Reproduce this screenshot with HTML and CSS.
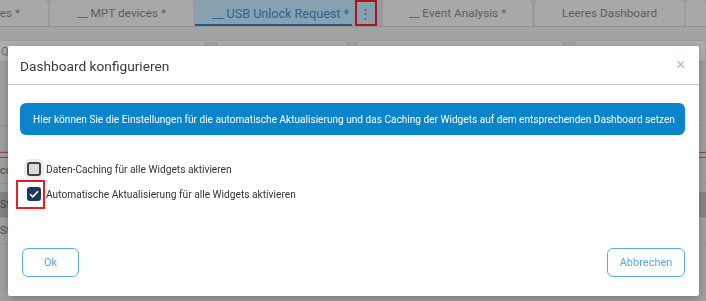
FILE: index.html
```html
<!DOCTYPE html>
<html lang="de">
<head>
  <meta charset="UTF-8">
  <title>Dashboard konfigurieren</title>
  <link rel="stylesheet" href="styles.css">
</head>
<body>
  <div class="page">
    <div class="tabs">
      <div class="tab tab-cut">Queries *</div>
      <div class="tab">__ MPT devices *</div>
      <div class="tab active">__ USB Unlock Request *</div>
      <div class="tab-menu"><span class="dots">&#8942;</span></div>
      <div class="tab tab-wide">__ Event Analysis *</div>
      <div class="tab tab-wide">Leeres Dashboard</div>
      <div class="tab tab-rest"></div>
    </div>
    <div class="toolbar">
      <div class="field search"><span class="field-text">Queue</span><span class="lens"></span></div>
      <div class="field select"><span class="doc"></span><span class="field-text">Dashboard</span></div>
      <div class="field search"><span class="field-text">Alerts</span><span class="lens"></span></div>
      <div class="field select"><span class="doc"></span><span class="field-text">Dashboard</span></div>
    </div>
    <div class="workspace">
      <div class="row"></div>
      <div class="row"></div>
      <div class="row red"></div>
      <div class="row">comp</div>
      <div class="row dark">Status</div>
      <div class="row">Status</div>
    </div>
  </div>

  <div class="backdrop"></div>

  <div class="modal">
    <div class="modal-header">
      <span class="modal-title">Dashboard konfigurieren</span>
      <span class="close">&times;</span>
    </div>
    <div class="modal-body">
      <div class="info">Hier können Sie die Einstellungen für die automatische Aktualisierung und das Caching der Widgets auf dem entsprechenden Dashboard setzen</div>
      <div class="options">
        <label class="option">
          <span class="check focused"></span>
          <span>Daten-Caching für alle Widgets aktivieren</span>
        </label>
        <label class="option">
          <span class="check checked marked">
            <svg width="10" height="8" viewBox="0 0 10 8"><path d="M1 4.2 L3.8 6.8 L9 1.2" fill="none" stroke="#fff" stroke-width="1.6"/></svg>
          </span>
          <span>Automatische Aktualisierung für alle Widgets aktivieren</span>
        </label>
      </div>
    </div>
    <div class="modal-footer">
      <button class="btn btn-ok">Ok</button>
      <button class="btn btn-cancel">Abbrechen</button>
    </div>
  </div>
</body>
</html>
```

FILE: styles.css
```css
body {
  margin: 0;
  font-family: Roboto, "Liberation Sans", sans-serif;
  background-color: #e4e4e4;
  overflow: hidden;
}
.page {
  width: 706px;
  height: 301px;
}
.tabs {
  display: flex;
  gap: 2px;
  height: 26px;
  background-color: #dedede;
  border-bottom: 1px solid #d2d2d2;
}
.tab {
  display: flex;
  align-items: center;
  justify-content: center;
  flex-shrink: 0;
  width: 143px;
  height: 26px;
  background-color: #f1f1f1;
  border-radius: 4px 4px 0 0;
  color: #888;
  font-size: 11.8px;
  white-space: nowrap;
  overflow: hidden;
}
.tab-cut {
  width: 48px;
  justify-content: flex-end;
  padding-right: 28px;
  box-sizing: border-box;
  border-radius: 0 4px 0 0;
}
.tab.active {
  width: 157px;
  justify-content: flex-end;
  padding-right: 3px;
  box-sizing: border-box;
  background-color: #c5e6fc;
  color: #4390ce;
  font-size: 12.6px;
  box-shadow: inset 0 -2px 0 #2a82cb;
  border-radius: 0;
}
.tab-menu {
  position: relative;
  flex-shrink: 0;
  width: 27px;
  height: 26px;
  margin-left: -2px;
  margin-right: 1px;
  background-color: #c5e6fc;
  display: flex;
  align-items: center;
  justify-content: center;
  color: #8a8a8a;
  font-size: 13px;
}
.tab-menu::after {
  content: "";
  position: absolute;
  left: 3px;
  top: 0;
  width: 22px;
  height: 26px;
  border: 2px solid #ff1a22;
  box-sizing: border-box;
}
.tab-wide {
  width: 149px;
  margin-left: 1px;
}
.tab-rest {
  flex: 1;
}
.toolbar {
  display: flex;
  gap: 10px;
  padding: 13px 0 0 0;
  background-color: #eaeaea;
  height: 20px;
}
.field {
  display: flex;
  align-items: center;
  height: 22px;
  background-color: #fafafa;
  border: 1px solid #dcdcdc;
  border-radius: 4px;
  font-size: 11px;
  color: #999;
  box-sizing: border-box;
}
.search {
  width: 230px;
  justify-content: space-between;
  padding: 0 6px 0 2px;
  margin-left: -2px;
}
.select {
  width: 146px;
  gap: 6px;
  padding-left: 3px;
  color: #555;
}
.lens {
  width: 9px;
  height: 9px;
  border: 1px solid #aaa;
  border-radius: 50%;
}
.doc {
  width: 7px;
  height: 9px;
  background-color: #1d3550;
  border-radius: 1px;
}
.workspace {
  padding-top: 40px;
  background-color: #e4e4e4;
}
.row {
  height: 25px;
  border-bottom: 1px solid #d6d6d6;
  font-size: 11px;
  color: #666;
  line-height: 25px;
}
.row.red {
  border-top: 1px solid #c66;
  border-bottom: 1px solid #c66;
  height: 4px;
}
.row.dark {
  background-color: #bdbdbd;
  margin-top: 8px;
}
.backdrop {
  position: fixed;
  inset: 0;
  background-color: rgba(0, 0, 0, 0.3);
}
.modal {
  position: fixed;
  left: 8px;
  top: 46px;
  width: 691px;
  height: 250px;
  background-color: #fff;
  border-radius: 2px;
  box-shadow: 0 2px 8px rgba(0, 0, 0, 0.25);
  display: flex;
  flex-direction: column;
}
.modal-header {
  display: flex;
  align-items: center;
  justify-content: space-between;
  height: 39px;
  padding: 2px 14px 0 12px;
  box-sizing: border-box;
  border-bottom: 1px solid #c9c9c9;
}
.modal-title {
  font-size: 13.7px;
  color: #3a3a3a;
}
.close {
  font-size: 16px;
  color: #b4bcc4;
  line-height: 1;
  margin-top: -2px;
}
.modal-body {
  padding: 18px 14px 0 12px;
}
.info {
  height: 32px;
  display: flex;
  align-items: center;
  padding-left: 13px;
  background-color: #0a84cb;
  border-radius: 6px;
  color: #fff;
  font-size: 10.1px;
  white-space: nowrap;
}
.options {
  margin-top: 27px;
  padding-left: 7px;
  display: flex;
  flex-direction: column;
  gap: 11px;
}
.option {
  display: flex;
  align-items: center;
  gap: 5px;
  font-size: 10.2px;
  color: #333;
  height: 14px;
}
.check {
  position: relative;
  width: 14px;
  height: 14px;
  box-sizing: border-box;
  border-radius: 3px;
  display: flex;
  align-items: center;
  justify-content: center;
}
.check.focused {
  background-color: #dadada;
  border: 2px solid #444;
  box-shadow: 0 0 0 3px #ececec;
}
.check.checked {
  background-color: #1c3860;
}
.check.marked::after {
  content: "";
  position: absolute;
  left: -11px;
  top: -7px;
  width: 29px;
  height: 29px;
  border: 2px solid #ea1c24;
  box-sizing: border-box;
}
.modal-footer {
  margin-top: auto;
  display: flex;
  justify-content: space-between;
  padding: 0 14px 19px 14px;
}
.btn {
  height: 29px;
  background-color: #fff;
  border: 1px solid #58acdf;
  border-radius: 6px;
  color: #5aa9dc;
  font-family: Roboto, "Liberation Sans", sans-serif;
  font-size: 11px;
  cursor: pointer;
}
.btn-ok {
  width: 57px;
}
.btn-cancel {
  width: 78px;
}
```
